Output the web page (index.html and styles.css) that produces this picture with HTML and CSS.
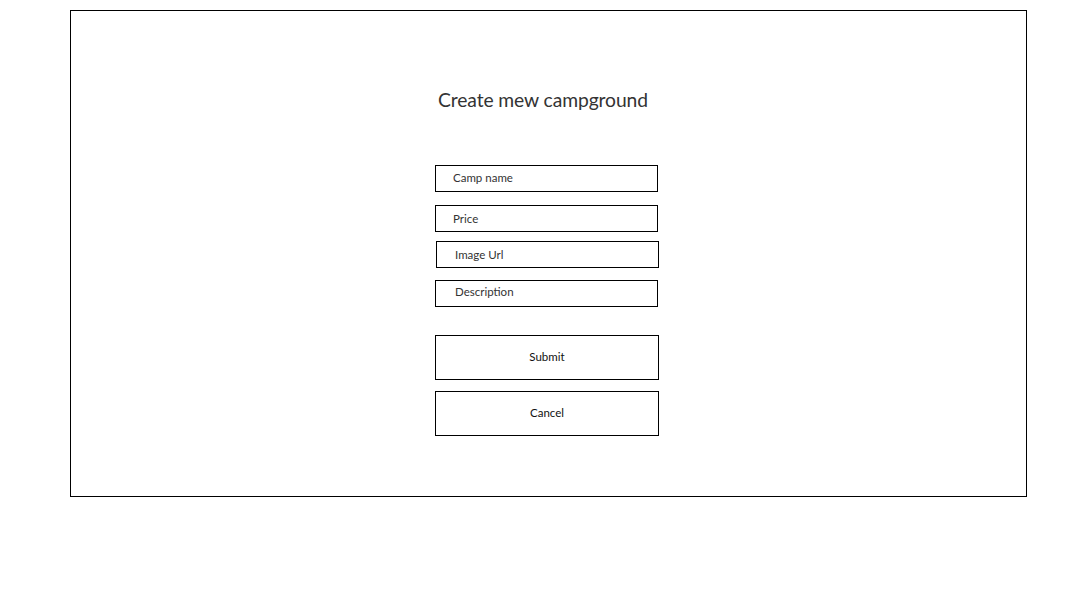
FILE: index.html
```html
<!DOCTYPE html>
<html>
<head>
<meta charset="utf-8">
<link rel="stylesheet" href="styles.css">
</head>
<body>
<div class="frame">
  <form class="form">
    <h1 class="title">Create mew campground</h1>
    <input class="field f1" type="text" placeholder="Camp name">
    <input class="field f2" type="text" placeholder="Price">
    <input class="field f3" type="text" placeholder="Image Url">
    <input class="field f4" type="text" placeholder="Description">
    <button type="button" class="btn b1">Submit</button>
    <button type="button" class="btn b2">Cancel</button>
  </form>
</div>
</body>
</html>
```

FILE: styles.css
```css
html, body {
  margin: 0;
  padding: 0;
  background: #fff;
}
body {
  font-family: Lato, "Liberation Sans", sans-serif;
  color: #333;
}
.frame {
  box-sizing: border-box;
  margin: 10px 0 0 70px;
  width: 957px;
  height: 487px;
  border: 1px solid #000;
}
.form {
  display: flex;
  flex-direction: column;
  align-items: flex-start;
  padding: 76px 0 0 364px;
  margin: 0;
}
.title {
  margin: 0 0 0 3px;
  font-weight: 400;
  font-size: 19.3px;
  line-height: 25px;
  color: #333;
  letter-spacing: -0.1px;
}
.field {
  box-sizing: border-box;
  width: 223px;
  height: 27px;
  border: 1px solid #000;
  border-radius: 0;
  margin: 0;
  padding: 0 0 0 17px;
  font-family: inherit;
  font-size: 11.5px;
  color: #333;
  background: #fff;
  outline: none;
}
.field::placeholder {
  color: #333;
  opacity: 1;
}
.f1 { margin-top: 53px; padding-bottom: 3px; }
.f2 { margin-top: 13px; }
.f3 { margin-top: 9px; margin-left: 1px; padding-left: 18px; }
.f4 { margin-top: 12px; padding-left: 19px; padding-bottom: 5px; }
.btn {
  box-sizing: border-box;
  width: 224px;
  height: 45px;
  border: 1px solid #000;
  border-radius: 0;
  background: #fff;
  font-family: inherit;
  font-size: 11.5px;
  color: #111;
  margin: 0;
  padding: 0 0 2px;
}
.b1 { margin-top: 28px; }
.b2 { margin-top: 11px; }
```
